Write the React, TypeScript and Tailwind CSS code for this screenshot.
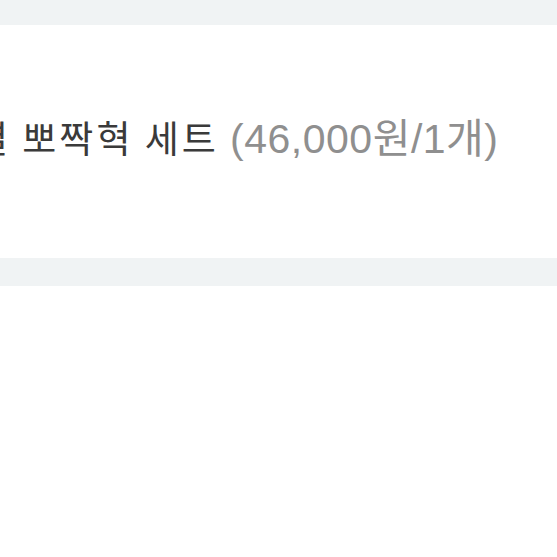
export default function App() {
  return (
    <div className="w-[557px] h-[557px] bg-white overflow-hidden flex flex-col" style={{ fontFamily: '"Noto Sans CJK KR", "Noto Sans", sans-serif' }}>
      <div className="h-[25px] bg-[#f0f3f4] shrink-0" />
      <div className="h-[233px] shrink-0 flex items-center">
        <div className="whitespace-nowrap ml-[-26px] mt-[-4px] flex items-baseline leading-none">
          <span className="text-[#3a3a3a] text-[37px] font-normal tracking-[3px]">결 뽀짝혁 세트&nbsp;</span>
          <span className="text-[#8f8f8f] text-[41px] tracking-[0.5px] font-[Liberation_Sans,'Noto_Sans_CJK_KR',sans-serif]">(46,000원/1개)</span>
        </div>
      </div>
      <div className="h-[28px] bg-[#f0f3f4] shrink-0" />
      <div className="flex-1 bg-white" />
    </div>
  );
}
